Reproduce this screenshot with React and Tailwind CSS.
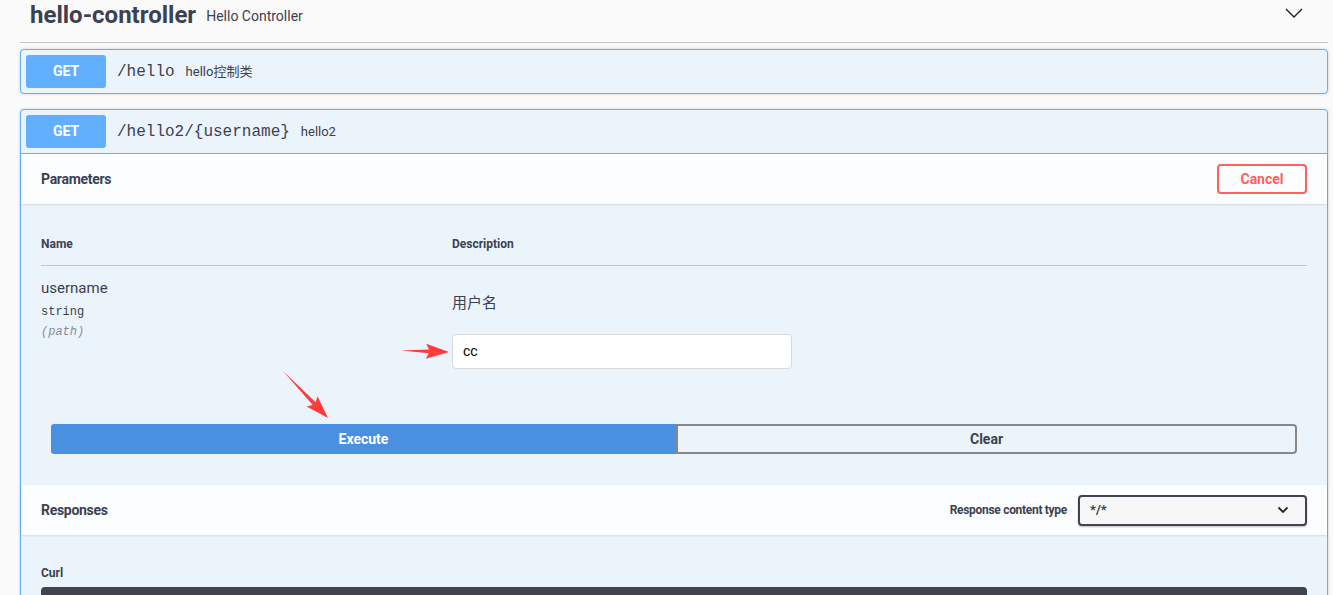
import React from "react";

const arrowPoints = (x1, y1, x2, y2, headLen, headHalf, shaftHalf) => {
  const dx = x2 - x1;
  const dy = y2 - y1;
  const len = Math.hypot(dx, dy);
  const ux = dx / len;
  const uy = dy / len;
  const nx = -uy;
  const ny = ux;
  const bx = x2 - ux * headLen;
  const by = y2 - uy * headLen;
  const wx = bx - ux * 3;
  const wy = by - uy * 3;
  const pts = [
    [x1, y1],
    [bx + nx * shaftHalf, by + ny * shaftHalf],
    [wx + nx * headHalf, wy + ny * headHalf],
    [x2, y2],
    [wx - nx * headHalf, wy - ny * headHalf],
    [bx - nx * shaftHalf, by - ny * shaftHalf],
  ];
  return pts.map((p) => p.join(",")).join(" ");
};

const OpHeader = ({ path, summary }) => {
  return (
    <div className="flex items-center p-[5px]">
      <div className="w-[80px] h-[33px] rounded-[3px] bg-[#61affe] text-white text-[14px] font-bold flex items-center justify-center">
        GET
      </div>
      <span className="px-[11px] text-[16px] text-[#3b4151] font-['Liberation_Mono',monospace]">
        {path}
      </span>
      <span className="text-[13px] text-[#3b4151]">{summary}</span>
    </div>
  );
};

const App = () => {
  return (
    <div className="relative min-h-screen overflow-hidden bg-[#fafafa] text-[#3b4151] font-['Roboto','Noto_Sans_CJK_SC',sans-serif]">
      <div className="pl-[20px] pr-[5px]">
        {/* tag header */}
        <div className="flex items-start h-[43px] border-b border-[#c6c7cb] pl-[10px] pt-[2px]">
          <h3 className="text-[24px] leading-[26px] font-bold text-[#3b4151]">hello-controller</h3>
          <span className="ml-[10px] mt-[4px] text-[14px] leading-[20px]">Hello Controller</span>
          <svg className="ml-auto mr-[24px] mt-[4px]" width="20" height="14" viewBox="0 0 20 14">
            <path d="M2 3 L10 11 L18 3" fill="none" stroke="#222" strokeWidth="1.4" />
          </svg>
        </div>

        {/* op 1 */}
        <div className="mt-[6px] border border-[#61affe] rounded-[4px] bg-[#ebf3fb] shadow-[0_0_3px_rgba(0,0,0,0.19)]">
          <OpHeader path="/hello" summary="hello控制类" />
        </div>

        {/* op 2 */}
        <div className="mt-[15px] border border-[#61affe] rounded-[4px] bg-[#ebf3fb] shadow-[0_0_3px_rgba(0,0,0,0.19)]">
          <div className="border-b border-[#61affe]">
            <OpHeader path="/hello2/{username}" summary="hello2" />
          </div>

          <div className="h-[50px] px-[20px] flex items-center bg-white/80 shadow-[0_1px_2px_rgba(0,0,0,0.1)]">
            <h4 className="text-[14px] font-bold tracking-[-0.3px]">Parameters</h4>
            <button className="ml-auto w-[90px] h-[30px] border-2 border-[#ff6060] rounded-[4px] text-[#ff6060] text-[14px] font-bold bg-transparent">
              Cancel
            </button>
          </div>

          <div className="px-[20px] pt-[20px]">
            <div className="flex pt-[12px] pb-[13px] border-b border-[#c4c7cf] text-[12px] leading-[16px] font-bold">
              <div className="w-[411px]">Name</div>
              <div>Description</div>
            </div>
            <div className="flex pt-[10px]">
              <div className="w-[411px]">
                <div className="text-[15px] leading-[24px]">username</div>
                <div className="mt-[4px] text-[12px] leading-[16px] font-['Liberation_Mono',monospace]">string</div>
                <div className="mt-[4px] text-[12px] leading-[16px] italic text-[#3b4151]/60 font-['Liberation_Mono',monospace]">
                  (path)
                </div>
              </div>
              <div>
                <div className="mt-[16px] text-[15px] leading-[22px]">用户名</div>
                <div className="mt-[20px] w-[340px] h-[35px] bg-white border border-[#d9d9d9] rounded-[4px] flex items-center px-[10px] text-[14px] text-black">
                  cc
                </div>
              </div>
            </div>
          </div>

          <div className="px-[30px] pt-[55px] pb-[31px] flex">
            <button className="flex-1 h-[30px] bg-[#4990e2] rounded-l-[3px] text-white text-[14px] font-bold">
              Execute
            </button>
            <button className="w-[621px] h-[30px] border-2 border-[#888] rounded-r-[4px] text-[14px] font-bold text-[#3b4151] bg-transparent">
              Clear
            </button>
          </div>

          <div className="h-[50px] px-[20px] flex items-center bg-white/80 shadow-[0_1px_2px_rgba(0,0,0,0.1)]">
            <h4 className="text-[14px] font-bold tracking-[-0.3px]">Responses</h4>
            <span className="ml-auto text-[12px] font-bold tracking-[-0.3px]">Response content type</span>
            <div className="ml-[11px] w-[229px] h-[31px] border-2 border-[#41444e] rounded-[4px] bg-[#f7f7f7] shadow-[0_1px_2px_rgba(0,0,0,0.25)] flex items-center pl-[10px] pr-[16px] text-[13px] font-bold">
              */*
              <svg className="ml-auto" width="12" height="8" viewBox="0 0 12 8">
                <path d="M1.5 1.5 L6 6 L10.5 1.5" fill="none" stroke="#222" strokeWidth="1.8" />
              </svg>
            </div>
          </div>

          <div className="px-[20px] pt-[30px] pb-[20px]">
            <h4 className="text-[12px] leading-[16px] font-bold">Curl</h4>
            <div className="mt-[6px] h-[70px] rounded-[4px] bg-[#41444e]"></div>
          </div>
        </div>
      </div>

      {/* annotation arrows */}
      <svg className="absolute left-0 top-0 pointer-events-none" width="1333" height="595">
        <polygon points={arrowPoints(401, 350.5, 449, 352, 20, 7.5, 2)} fill="#ff3b3b" />
        <polygon points={arrowPoints(283, 371, 328, 418, 20, 7.5, 2)} fill="#ff3b3b" />
      </svg>
    </div>
  );
};

export default App;
